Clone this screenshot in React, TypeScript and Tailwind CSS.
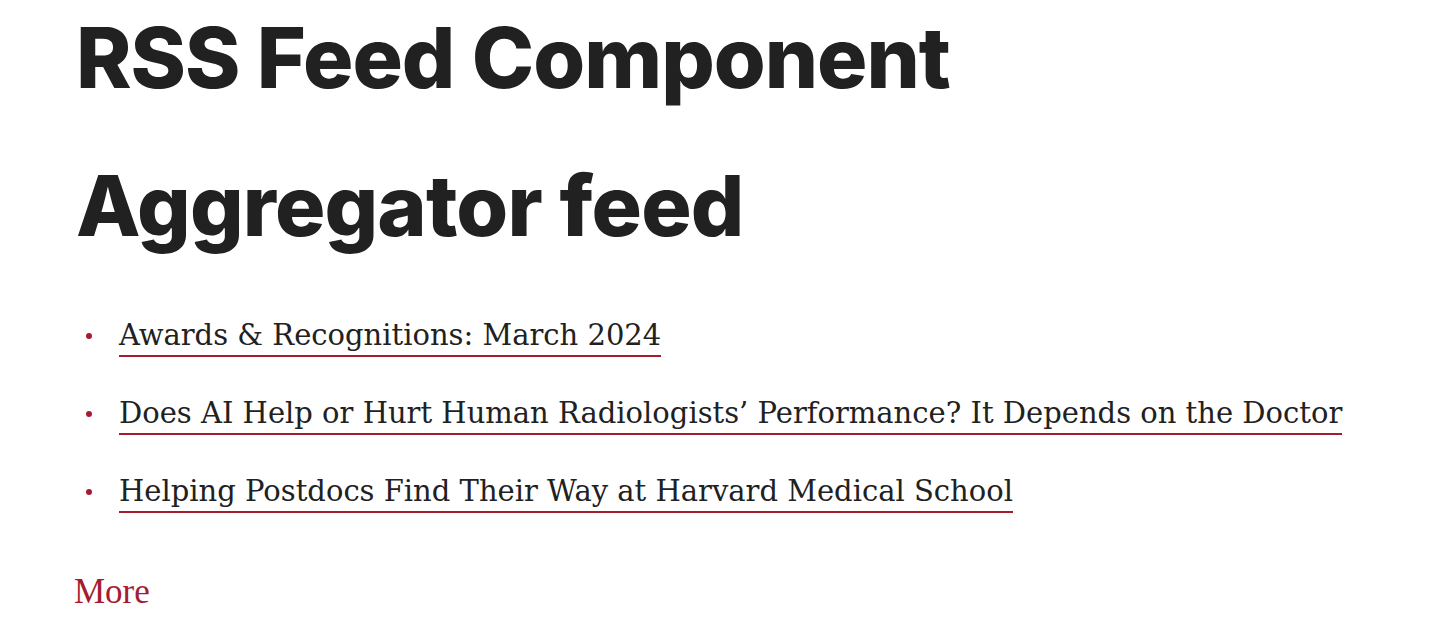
const items = [
  "Awards & Recognitions: March 2024",
  "Does AI Help or Hurt Human Radiologists’ Performance? It Depends on the Doctor",
  "Helping Postdocs Find Their Way at Harvard Medical School",
];

export default function App() {
  return (
    <div className="min-h-screen bg-white pl-[76px] pt-[8px] text-[#212121]">
      <h1 className="font-['Inter',sans-serif] text-[84px] font-extrabold leading-[100px] tracking-[-0.012em]">
        RSS Feed Component
      </h1>
      <h2 className="mt-[48px] font-['Inter',sans-serif] text-[84px] font-extrabold leading-[100px] tracking-[-0.01em]">
        Aggregator feed
      </h2>

      <ul className="mt-[59px] flex flex-col gap-[36px] font-['DejaVu_Serif',serif] text-[29px] leading-[42px]">
        {items.map((t) => (
          <li key={t} className="flex items-center">
            <span className="mr-[27px] ml-[10px] inline-block h-[6px] w-[6px] rounded-full bg-[#a51c30]" />
            <a href="#" className="border-b-2 border-[#a51c30] leading-[40px]">
              {t}
            </a>
          </li>
        ))}
      </ul>

      <a
        href="#"
        className="-ml-[2px] mt-[59px] block font-['Liberation_Serif',serif] text-[35px] font-light leading-[40px] text-[#a51c30]"
      >
        More
      </a>
    </div>
  );
}
